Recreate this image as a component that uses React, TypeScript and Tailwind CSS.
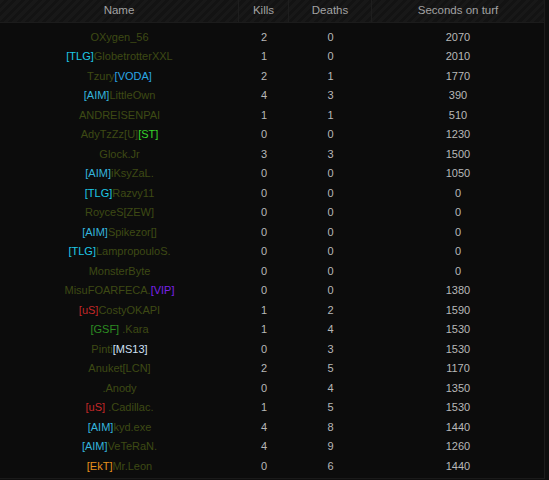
import React from 'react';

type Row = {
  pre?: [string, string];
  name: string;
  post?: [string, string];
  kills: number;
  deaths: number;
  secs: number;
};

const rows: Row[] = [
  { name: 'OXygen_56', kills: 2, deaths: 0, secs: 2070 },
  { pre: ['[TLG]', 'text-[#1ec8e6]'], name: 'GlobetrotterXXL', kills: 1, deaths: 0, secs: 2010 },
  { name: 'Tzury', post: ['[VODA]', 'text-[#2aa6e4]'], kills: 2, deaths: 1, secs: 1770 },
  { pre: ['[AIM]', 'text-[#34b4dc]'], name: 'LittleOwn', kills: 4, deaths: 3, secs: 390 },
  { name: 'ANDREISENPAI', kills: 1, deaths: 1, secs: 510 },
  { name: 'AdyTzZz[U]', post: ['[ST]', 'text-[#36d42a]'], kills: 0, deaths: 0, secs: 1230 },
  { name: 'Glock.Jr', kills: 3, deaths: 3, secs: 1500 },
  { pre: ['[AIM]', 'text-[#34b4dc]'], name: 'iKsyZaL.', kills: 0, deaths: 0, secs: 1050 },
  { pre: ['[TLG]', 'text-[#1ec8e6]'], name: 'Razvy11', kills: 0, deaths: 0, secs: 0 },
  { name: 'RoyceS[ZEW]', kills: 0, deaths: 0, secs: 0 },
  { pre: ['[AIM]', 'text-[#34b4dc]'], name: 'Spikezor[]', kills: 0, deaths: 0, secs: 0 },
  { pre: ['[TLG]', 'text-[#1ec8e6]'], name: 'LampropouloS.', kills: 0, deaths: 0, secs: 0 },
  { name: 'MonsterByte', kills: 0, deaths: 0, secs: 0 },
  { name: 'MisuFOARFECA.', post: ['[VIP]', 'text-[#7a22e8]'], kills: 0, deaths: 0, secs: 1380 },
  { pre: ['[uS]', 'text-[#c42828]'], name: 'CostyOKAPI', kills: 1, deaths: 2, secs: 1590 },
  { pre: ['[GSF]', 'text-[#2c8c22]'], name: ' .Kara', kills: 1, deaths: 4, secs: 1530 },
  { name: 'Pinti', post: ['[MS13]', 'text-[#d0e0f4]'], kills: 0, deaths: 3, secs: 1530 },
  { name: 'Anuket[LCN]', kills: 2, deaths: 5, secs: 1170 },
  { name: '.Anody', kills: 0, deaths: 4, secs: 1350 },
  { pre: ['[uS]', 'text-[#c42828]'], name: ' .Cadillac.', kills: 1, deaths: 5, secs: 1530 },
  { pre: ['[AIM]', 'text-[#34b4dc]'], name: 'kyd.exe', kills: 4, deaths: 8, secs: 1440 },
  { pre: ['[AIM]', 'text-[#34b4dc]'], name: 'VeTeRaN.', kills: 4, deaths: 9, secs: 1260 },
  { pre: ['[EkT]', 'text-[#e8901c]'], name: 'Mr.Leon', kills: 0, deaths: 6, secs: 1440 },
];

const stripes = {
  backgroundImage:
    'repeating-linear-gradient(135deg, #181818 0px, #181818 3px, #131313 3px, #131313 6px)',
};

export default function App() {
  return (
    <div className="w-[549px] h-[480px] bg-[#0e0e0e] overflow-hidden font-['Liberation_Sans',Arial,sans-serif] text-[11px]">
      <div className="w-[545px] border-r border-[#1c1c1c]">
        {/* header */}
        <div
          className="flex h-[23px] items-center text-[#a2a2a2] text-[11.5px] border-b border-[#1c1c1c]"
          style={stripes}
        >
          <div className="w-[239px] h-full flex items-center justify-center border-r border-[#1e1e1e]">Name</div>
          <div className="w-[50px] h-full flex items-center justify-center border-r border-[#1e1e1e]">Kills</div>
          <div className="w-[83px] h-full flex items-center justify-center border-r border-[#1e1e1e]">Deaths</div>
          <div className="flex-1 h-full flex items-center justify-center">Seconds on turf</div>
        </div>

        {/* rows */}
        <div className="pt-[4px] pb-[2px] bg-[#0c0c0c] border-b border-[#1a1a1a]">
          {rows.map((r, i) => (
            <div key={i} className="flex h-[19.5px] items-center">
              <div className="w-[239px] text-center text-[#3e4a14] whitespace-pre">
                {r.pre && <span className={r.pre[1]}>{r.pre[0]}</span>}
                {r.name}
                {r.post && <span className={r.post[1]}>{r.post[0]}</span>}
              </div>
              <div className="w-[50px] text-center text-[#b8b8b8]">{r.kills}</div>
              <div className="w-[83px] text-center text-[#b8b8b8]">{r.deaths}</div>
              <div className="flex-1 text-center text-[#b8b8b8]">{r.secs}</div>
            </div>
          ))}
        </div>
      </div>
    </div>
  );
}
